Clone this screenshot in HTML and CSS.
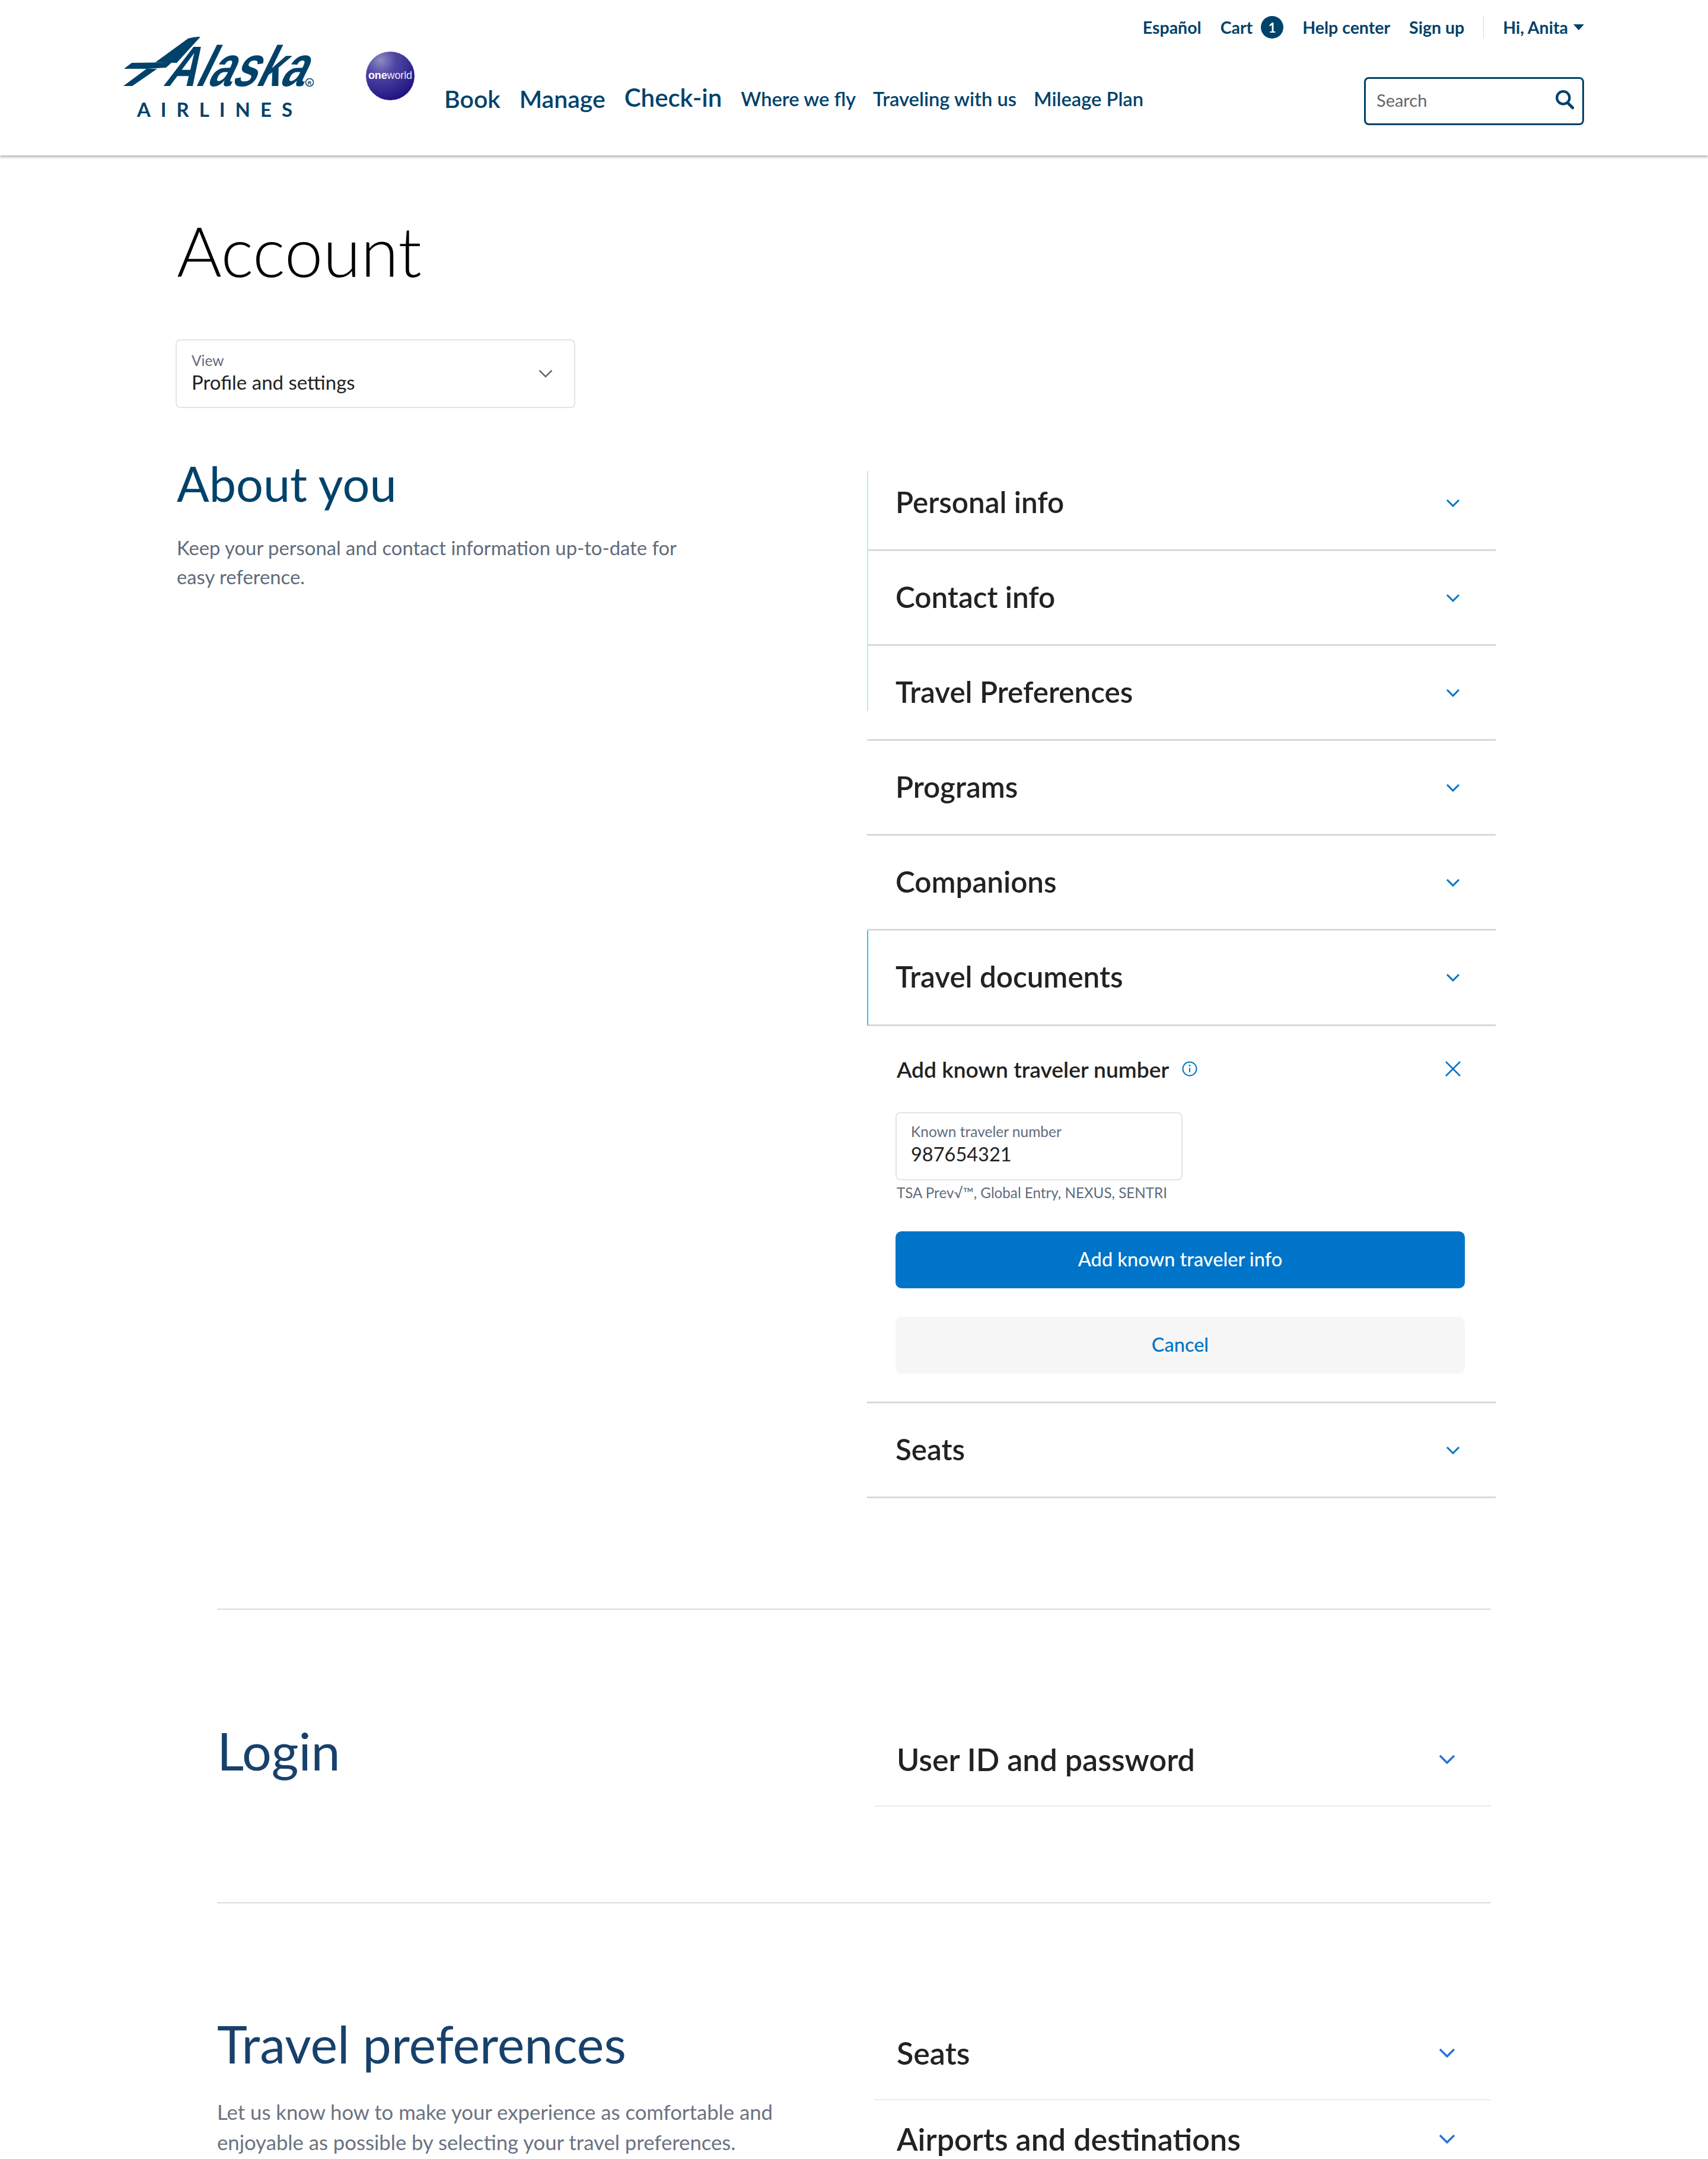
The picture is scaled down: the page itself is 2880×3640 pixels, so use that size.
FILE: index.html
```html
<!DOCTYPE html>
<html lang="en">
<head>
<meta charset="utf-8">
<title>Account</title>
<link rel="stylesheet" href="styles.css">
</head>
<body>
<header class="site-header">
  <a class="brand" href="#" aria-label="Alaska Airlines">
    <svg class="brand-logo" viewBox="0 0 360 180" width="360" height="180">
      <path class="logo-fill" d="M19 76 L32 66 L100 65 L90 74 L57 76 Z"/>
      <path class="logo-fill" d="M18 105 L33 105 L75 76 L57 76 Z"/>
      <path class="logo-fill" d="M72 65 L127 25 Q136 22 148 22 L108 66 Z"/>
      <text class="logo-word" transform="translate(84 105) skewX(-26)" textLength="236" lengthAdjust="spacingAndGlyphs">Alaska</text>
      <circle class="logo-reg" cx="332" cy="99" r="6.500"/>
      <text class="logo-reg-r" x="332" y="102.500" text-anchor="middle">R</text>
      <text class="logo-air" x="41" y="157" textLength="262">AIRLINES</text>
    </svg>
  </a>
  <svg class="oneworld" viewBox="0 0 84 84" width="84" height="84">
    <defs>
      <radialGradient id="ow" cx="0.3" cy="0.18" r="0.9">
        <stop offset="0" stop-color="#8f8ac2"/>
        <stop offset="0.35" stop-color="#4f46a3"/>
        <stop offset="1" stop-color="#1d0f80"/>
      </radialGradient>
    </defs>
    <circle cx="42" cy="42" r="41" fill="url(#ow)"/>
    <text x="42" y="47" text-anchor="middle" class="ow-text" textLength="74"><tspan class="ow-one">one</tspan>world</text>
  </svg>
  <div class="header-main">
    <nav class="util-nav">
      <a href="#">Español</a>
      <a href="#" class="cart">Cart <span class="cart-badge">1</span></a>
      <a href="#">Help center</a>
      <a href="#">Sign up</a>
      <span class="util-sep"></span>
      <a href="#" class="user">Hi, Anita <span class="caret"></span></a>
    </nav>
    <div class="main-row">
      <nav class="main-nav">
        <a href="#" class="nav-lg">Book</a>
        <a href="#" class="nav-lg">Manage</a>
        <a href="#" class="nav-xl">Check-in</a>
        <a href="#" class="nav-sm">Where we fly</a>
        <a href="#" class="nav-sm">Traveling with us</a>
        <a href="#" class="nav-sm">Mileage Plan</a>
      </nav>
      <div class="search">
        <span class="search-ph">Search</span>
        <svg class="search-icon" viewBox="0 0 32 32" width="34" height="34"><circle cx="14" cy="13" r="10" fill="none" stroke="#00426a" stroke-width="4"/><path d="M21 21 L29 29" stroke="#00426a" stroke-width="4.500" stroke-linecap="round"/></svg>
      </div>
    </div>
  </div>
</header>

<main class="page">
  <div class="account-top">
    <h1 class="page-title">Account</h1>
    <div class="select-box">
      <div class="select-text">
        <div class="field-label">View</div>
        <div class="field-value">Profile and settings</div>
      </div>
      <svg class="select-chev" viewBox="0 0 24 14" width="24" height="14"><path d="M1.500 1.500 L12 12 L22.500 1.500" fill="none" stroke="#5f6b7a" stroke-width="2.500"/></svg>
    </div>
  </div>

  <section class="about">
    <div class="about-left">
      <h2 class="section-title">About you</h2>
      <p class="section-desc">Keep your personal and contact information up-to-date for easy reference.</p>
    </div>
    <div class="accordion">
      <span class="rail rail-light"></span>
      <div class="acc-row"><span>Personal info</span><svg class="chev" viewBox="0 0 24 14" width="24" height="14"><path d="M2 2 L12 12 L22 2"/></svg></div>
      <div class="acc-row"><span>Contact info</span><svg class="chev" viewBox="0 0 24 14" width="24" height="14"><path d="M2 2 L12 12 L22 2"/></svg></div>
      <div class="acc-row"><span>Travel Preferences</span><svg class="chev" viewBox="0 0 24 14" width="24" height="14"><path d="M2 2 L12 12 L22 2"/></svg></div>
      <div class="acc-row"><span>Programs</span><svg class="chev" viewBox="0 0 24 14" width="24" height="14"><path d="M2 2 L12 12 L22 2"/></svg></div>
      <div class="acc-row"><span>Companions</span><svg class="chev" viewBox="0 0 24 14" width="24" height="14"><path d="M2 2 L12 12 L22 2"/></svg></div>
      <div class="acc-row acc-active"><span>Travel documents</span><svg class="chev" viewBox="0 0 24 14" width="24" height="14"><path d="M2 2 L12 12 L22 2"/></svg></div>
      <div class="acc-panel">
        <div class="panel-head">
          <div class="panel-title">Add known traveler number
            <svg class="info" viewBox="0 0 26 26" width="26" height="26"><circle cx="13" cy="13" r="11.500" fill="none" stroke="#0074c8" stroke-width="2"/><path d="M13 11.500 V19" stroke="#0074c8" stroke-width="2"/><circle cx="13" cy="7.500" r="1.400" fill="#0074c8"/></svg>
          </div>
          <svg class="close" viewBox="0 0 28 28" width="28" height="28"><path d="M2 2 L26 26 M26 2 L2 26" stroke="#0074c8" stroke-width="2.500" fill="none"/></svg>
        </div>
        <div class="ktn-box">
          <div class="field-label">Known traveler number</div>
          <div class="field-value ktn-value">987654321</div>
        </div>
        <div class="helper">TSA Prev√™, Global Entry, NEXUS, SENTRI</div>
        <button class="btn btn-primary">Add known traveler info</button>
        <button class="btn btn-secondary">Cancel</button>
      </div>
      <div class="acc-row"><span>Seats</span><svg class="chev" viewBox="0 0 24 14" width="24" height="14"><path d="M2 2 L12 12 L22 2"/></svg></div>
    </div>
  </section>

  <section class="lower login">
    <div class="lower-left">
      <h2 class="lower-title">Login</h2>
    </div>
    <div class="lower-list">
      <div class="lower-row"><span>User ID and password</span><svg class="chev2" viewBox="0 0 28 16" width="28" height="16"><path d="M2 2 L14 14 L26 2"/></svg></div>
    </div>
  </section>

  <section class="lower prefs">
    <div class="lower-left">
      <h2 class="lower-title">Travel preferences</h2>
      <p class="lower-desc">Let us know how to make your experience as comfortable and enjoyable as possible by selecting your travel preferences.</p>
    </div>
    <div class="lower-list">
      <div class="lower-row"><span>Seats</span><svg class="chev2" viewBox="0 0 28 16" width="28" height="16"><path d="M2 2 L14 14 L26 2"/></svg></div>
      <div class="lower-row lower-last"><span>Airports and destinations</span><svg class="chev2" viewBox="0 0 28 16" width="28" height="16"><path d="M2 2 L14 14 L26 2"/></svg></div>
    </div>
  </section>
</main>
</body>
</html>
```

FILE: styles.css
```css
* { box-sizing: border-box; }
html, body { margin: 0; padding: 0; height: 3640px; overflow: hidden; background: #fff; }
body { font-family: Lato, "Noto Sans", sans-serif; color: #222; }
a { color: inherit; text-decoration: none; }
h1, h2, p { margin: 0; font-weight: 400; }

/* header */
.site-header {
  display: flex;
  height: 262px;
  padding: 0 209px 0 190px;
  box-shadow: 0 3px 4px rgba(0,0,0,.28);
  color: #00426a;
}
.brand { display: block; width: 360px; height: 180px; margin-top: 40px; flex: none; }
.brand-logo { display: block; overflow: visible; }
.logo-fill { fill: #00426a; }
.logo-word { font: 700 96px "Liberation Sans", sans-serif; fill: #00426a; }
.logo-reg { fill: none; stroke: #00426a; stroke-width: 1.500; }
.logo-reg-r { font: 700 9px "Liberation Sans", sans-serif; fill: #00426a; }
.logo-air { font: 700 33px Lato, sans-serif; fill: #00426a; }
.oneworld { flex: none; margin: 86px 0 0 66px; }
.ow-text { font: 300 18px "Liberation Sans", sans-serif; fill: #e8e6f5; }
.ow-one { font-weight: 700; fill: #fff; }
.header-main { flex: 1; display: flex; flex-direction: column; margin-left: 49px; }
.util-nav {
  display: flex; justify-content: flex-end; align-items: center; gap: 32px;
  height: 46px; margin-top: 23px; font-size: 28.500px; font-weight: 700;
}
.cart { display: flex; align-items: center; gap: 14px; }
.cart-badge {
  display: flex; align-items: center; justify-content: center;
  width: 38px; height: 38px; border-radius: 50%;
  background: #00426a; color: #fff; font-size: 22px;
}
.util-sep { width: 1px; height: 36px; background: #d8d8d8; }
.user { display: flex; align-items: center; gap: 9px; }
.caret { width: 0; height: 0; border: 9px solid transparent; border-top: 10px solid #00426a; border-bottom: 0; }
.main-row { display: flex; justify-content: space-between; align-items: center; margin-top: 61px; }
.main-nav { display: flex; align-items: center; gap: 32px; padding-bottom: 8px; }
.nav-lg { font-size: 41px; font-weight: 600; }
.nav-xl { font-size: 42px; font-weight: 600; margin-top: -5px; }
.nav-sm { font-size: 32.700px; font-weight: 600; margin-right: -3px; }
.search {
  width: 371px; height: 81px;
  display: flex; align-items: center; justify-content: space-between;
  padding: 0 13px 0 18px;
  border: 3px solid #00426a; border-radius: 8px;
}
.search-ph { font-size: 29px; color: #666; margin-top: -5px; }
.search-icon { margin-top: -6px; }

/* page */
.account-top { padding: 0 0 0 296px; }
.page-title { font-size: 116px; font-weight: 300; color: #000; line-height: 150px; padding-top: 86px; margin-left: 2px; }
.select-box {
  display: flex; align-items: center; justify-content: space-between;
  width: 674px; height: 116px; margin-top: 74px;
  padding: 0 36px 0 25px;
  border: 2px solid #e4e4e4; border-radius: 8px;
}
.select-text { padding-bottom: 3px; }
.field-label { font-size: 24.500px; color: #5f6b7a; line-height: 30px; }
.field-value { font-size: 33px; color: #222; line-height: 42px; }

.about { display: flex; padding-left: 298px; margin-top: 81px; }
.about-left { width: 1164px; flex: none; margin-top: -4px; }
.section-title { font-size: 81px; color: #00426a; line-height: 100px; }
.section-desc { width: 880px; margin-top: 34px; font-size: 32.800px; line-height: 49px; color: #5f6b7a; }
.accordion { position: relative; width: 1060px; flex: none; }
.rail { position: absolute; left: 0; width: 2px; }
.rail-light { top: 25px; height: 405px; background: #b5ecfa; }
.acc-row {
  display: flex; align-items: center; justify-content: space-between;
  height: 160px; padding: 0 60px 0 48px;
  border-bottom: 3px solid #d9d9d9;
  font-size: 49.400px; font-weight: 600; color: #222;
}
.acc-row span { padding-bottom: 4px; }
.acc-active { height: 161px; border-left: 2px solid #26c4ee; padding-left: 46px; }
.chev { fill: none; stroke: #0074c8; stroke-width: 3; }
.acc-panel { height: 636px; padding: 49px 52px 0 48px; border-bottom: 3px solid #d9d9d9; }
.panel-head { display: flex; align-items: center; justify-content: space-between; height: 46px; padding-right: 6px; }
.panel-title { display: flex; align-items: center; gap: 22px; font-size: 37.200px; font-weight: 600; color: #222; padding-left: 2px; }
.ktn-box {
  width: 484px; height: 115px; margin-top: 50px;
  padding: 16px 24px 0;
  border: 2px solid #e4e4e4; border-radius: 8px;
}
.ktn-value { font-size: 32.500px; line-height: 46px; }
.helper { font-size: 24.200px; color: #5f6b7a; line-height: 30px; margin: 6px 0 0 2px; }
.btn {
  display: block; width: 100%; height: 96px;
  border: 0; border-radius: 10px; padding: 0 0 4px;
  font: 500 32.500px Lato, sans-serif;
}
.btn-primary { margin-top: 50px; background: #0074c8; color: #fff; }
.btn-secondary { margin-top: 48px; background: #f6f6f6; color: #0074c8; }

.lower {
  display: flex;
  margin: 0 366px;
  border-top: 2px solid #dcdcdc;
  width: 2148px;
}
.login { margin-top: 186px; height: 495px; }
.lower-left { width: 1108px; flex: none; }
.lower-title { font-size: 86.300px; line-height: 106px; color: #17416b; margin-top: 184px; }
.login .lower-title { font-size: 88px; }
.lower-desc { margin-top: 36px; font-size: 34.700px; line-height: 51px; color: #6b7280; width: 960px; }
.lower-list { flex: 1; padding-top: 174px; }
.lower-row {
  display: flex; align-items: center; justify-content: space-between;
  height: 158px; padding: 0 60px 0 38px;
  border-bottom: 2px solid #e9e9f2;
  font-size: 52px; font-weight: 600; color: #222;
}
.chev2 { fill: none; stroke: #2f6fd8; stroke-width: 3.500; }
.prefs { height: 433px; }
.lower-last { height: 98px; padding-top: 32px; border-bottom: 0; }
```
